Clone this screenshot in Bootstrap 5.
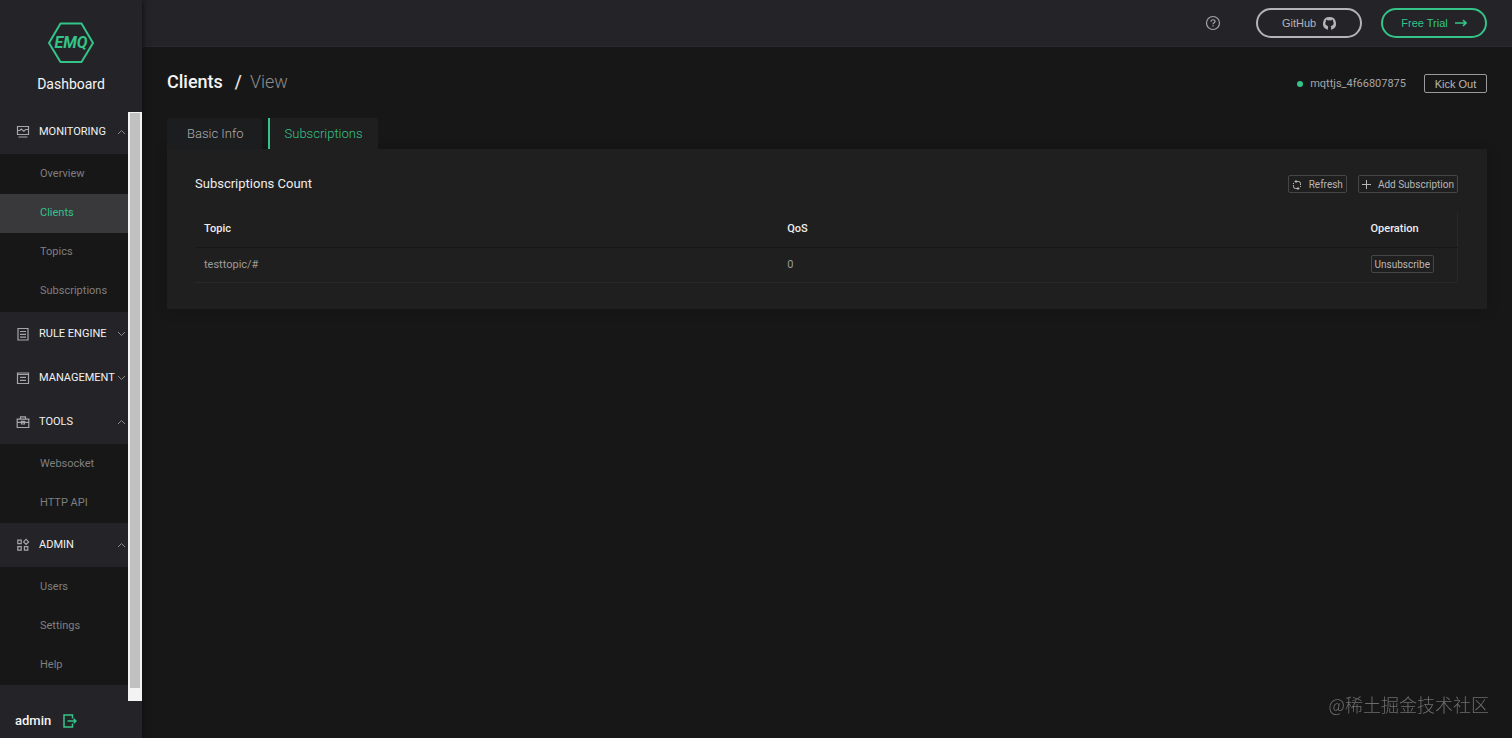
<!DOCTYPE html>
<html lang="en">
<head>
<meta charset="utf-8">
<meta name="viewport" content="width=device-width, initial-scale=1">
<title>EMQ Dashboard</title>
<link href="https://cdn.jsdelivr.net/npm/bootstrap@5.3.0/dist/css/bootstrap.min.css" rel="stylesheet">
<style>
  :root { --green: #34c388; --panel: #242428; --page: #171717; --box: #201f1f; }
  body { background: var(--page); color: #a6a6a8; font: 300 13px/20px Roboto, "Liberation Sans", sans-serif; }
  a { text-decoration: none; color: inherit; }
  svg { display: block; flex: none; fill: none; stroke: currentColor; }
  .sidebar { width: 142px; background: var(--panel); box-shadow: 1px 0 6px #101012; z-index: 2; }
  .brand { height: 110px; padding-top: 22px; }
  .brand-logo { color: var(--green); }
  .brand-name { font-size: 14px; font-weight: 400; color: #f4f4f4; margin-top: 10px; }
  .menu-scroll { min-height: 0; flex: 0 1 591px; }
  .menu-head { height: 44px; padding: 0 2px 0 16px; border: 0; background: none; color: #f2f2f2; font-size: 11px; font-weight: 400; white-space: nowrap; }
  .menu-head svg { color: #88888b; }
  .menu-head .menu-icon { margin-right: 9px; color: #a6a6a9; }
  .submenu { background: var(--page); padding-top: 1px; }
  .menu-section:first-child .submenu { padding-bottom: 1px; }
  .submenu a { height: 39px; line-height: 37px; padding-left: 40px; font-size: 11px; font-weight: 400; color: #7f7f80; display: block; }
  .submenu a.active { background: #39393c; color: var(--green); }
  .scroll-track { width: 14px; margin-top: 2px; background: #f3f3f4; padding: 1px 2px 13px; }
  .scroll-thumb { background: #c1c1c1; }
  .user-bar { height: 37px; padding: 2px 0 0 15px; color: #f4f4f4; font-size: 13px; font-weight: 500; }
  .user-bar button { color: var(--green); }
  .topbar { height: 47px; padding-right: 25px; background: var(--panel); border-bottom: 1px solid #29292d; }
  .help-link { margin-right: 35px; }
  .pill { width: 106px; height: 30px; gap: 7px; border: 2px solid #b4b4b8; border-radius: 15px; color: #b4b4b8; font: 11px/26px "Liberation Sans", sans-serif; }
  .pill-green { border-color: var(--green); color: var(--green); margin-left: 19px; }
  .content-area { padding: 20px 25px 24px; }
  .crumb { font-size: 18px; line-height: 30px; color: #8c8c8e; margin: 0; font-weight: 300; }
  .crumb a { font-weight: 500; color: #f4f4f4; }
  .crumb .slash { margin: 0 8px 0 12px; color: #e0e0e0; font-weight: 500; }
  .client-info { padding-top: 3px; }
  .status-dot { width: 6px; height: 6px; border-radius: 50%; background: var(--green); margin-right: 7px; }
  .client-id { font-size: 11px; font-weight: 400; margin-right: 18px; }
  .line-btn { background: transparent; font-family: Roboto, "Liberation Sans", sans-serif; font-weight: 400; border: 1px solid #464646; border-radius: 2px; color: #b8b8b8; font-size: 10px; line-height: 12px; height: 18px; padding: 1px 3px 0; white-space: nowrap; }
  .line-btn svg { margin-right: 7px; }
  .kick { font-family: "Liberation Sans", sans-serif; font-size: 11px; height: 19px; width: 63px; border-color: #9a9a9a; }
  .tab-row { margin-top: 21px; }
  .tab-row button { height: 31px; border: 0; background: var(--box); font-size: 13px; line-height: 30px; color: #adadb0; font-weight: 300; padding: 0 18px 0 20px; border-radius: 3px 3px 0 0; white-space: nowrap; }
  .tab-row button:first-child { background: #1b1d1f; }
  .tab-row button.active { color: var(--green); border-left: 2px solid var(--green); border-radius: 0 3px 0 0; padding: 0 15px; margin-left: 6px; }
  .panel-box { background: var(--box); padding: 25px 29px 26px 28px; box-shadow: 0 1px 8px #141414; }
  .panel-title { font-size: 13px; line-height: 20px; font-weight: 400; color: #ededed; margin: 0; }
  .panel-actions { gap: 11px; }
  .topics { table-layout: fixed; margin-top: 18px; border-right: 1px solid #292828; border-bottom: 1px solid #292828; }
  .topics th { height: 35px; font-size: 11px; font-weight: 500; color: #ededed; border-bottom: 1px solid #171717; padding: 0 9px; }
  .topics td { height: 35px; font-size: 11px; font-weight: 400; color: #9c9c9c; padding: 0 9px; }
  .topics .col-op { width: 96px; }
  .watermark { position: fixed; right: 23px; bottom: 21px; font: 300 18px/26px "Noto Sans CJK SC", sans-serif; color: #6d6d6d; }
</style>
</head>
<body>
<div class="d-flex min-vh-100">
  <aside class="sidebar d-flex flex-column flex-shrink-0 vh-100 sticky-top">
    <div class="brand d-flex flex-column align-items-center">
      <svg class="brand-logo" width="46" height="42" viewBox="0 0 46 42" stroke-width="2" stroke-linejoin="round" aria-label="EMQ">
        <path d="M12.500 1.500h21L45 21 33.500 40h-21L1 21Z"/>
        <text x="23" y="26" text-anchor="middle" font-family="Roboto" font-size="16" font-weight="700" font-style="italic" fill="currentColor" stroke="none">EMQ</text>
      </svg>
      <div class="brand-name">Dashboard</div>
    </div>
    <div class="menu-scroll d-flex">
      <nav class="flex-grow-1 overflow-hidden">
        <div class="menu-section">
          <button class="menu-head w-100 d-flex align-items-center">
            <svg class="menu-icon" width="14" height="14" viewBox="0 0 14 14" stroke-width="1.200"><path d="M1.500 1.500h11v8h-11zM1.500 5.500h2.300l1.500-1.500 2.500 2.300 2-1.800h2.700M2.500 12h9"/></svg>
            MONITORING
            <svg class="ms-auto" width="9" height="6" viewBox="0 0 9 6"><path d="M1 5l3.500-3.500L8 5"/></svg>
          </button>
          <div class="submenu"><a href="#">Overview</a><a href="#" class="active">Clients</a><a href="#">Topics</a><a href="#">Subscriptions</a></div>
        </div>
        <div class="menu-section">
          <button class="menu-head w-100 d-flex align-items-center">
            <svg class="menu-icon" width="14" height="14" viewBox="0 0 14 14" stroke-width="1.200"><path d="M2 1.500h10v11.500H2zM4 4.500h6M4 7.300h6M4 10.100h6"/></svg>
            RULE ENGINE
            <svg class="ms-auto" width="9" height="6" viewBox="0 0 9 6"><path d="M1 1l3.500 3.500L8 1"/></svg>
          </button>
        </div>
        <div class="menu-section">
          <button class="menu-head w-100 d-flex align-items-center">
            <svg class="menu-icon" width="14" height="14" viewBox="0 0 14 14" stroke-width="1.200"><path d="M1.500 2h11v10.500h-11zM1.500 3.500h11M4 6.300h6M4 9.300h6"/></svg>
            MANAGEMENT
            <svg class="ms-auto" width="9" height="6" viewBox="0 0 9 6"><path d="M1 1l3.500 3.500L8 1"/></svg>
          </button>
        </div>
        <div class="menu-section">
          <button class="menu-head w-100 d-flex align-items-center">
            <svg class="menu-icon" width="14" height="14" viewBox="0 0 14 14" stroke-width="1.200"><path d="M1.200 4.200h11.600v8.300H1.200zM4.500 4V1.800h5V4M1.200 7.300h11.600M5.500 6.300h3v2.700h-3z"/></svg>
            TOOLS
            <svg class="ms-auto" width="9" height="6" viewBox="0 0 9 6"><path d="M1 5l3.500-3.500L8 5"/></svg>
          </button>
          <div class="submenu"><a href="#">Websocket</a><a href="#">HTTP API</a></div>
        </div>
        <div class="menu-section">
          <button class="menu-head w-100 d-flex align-items-center">
            <svg class="menu-icon" width="14" height="14" viewBox="0 0 14 14" stroke-width="1.200"><path d="M1.800 2.200h3.400v3.400H1.800zM1.800 8.700h3.400v3.400H1.800zM8.400 8.700h3.400v3.400H8.400zM10.100 1.400l2.500 2.500-2.500 2.500-2.500-2.500z"/></svg>
            ADMIN
            <svg class="ms-auto" width="9" height="6" viewBox="0 0 9 6"><path d="M1 5l3.500-3.500L8 5"/></svg>
          </button>
          <div class="submenu"><a href="#">Users</a><a href="#">Settings</a><a href="#">Help</a></div>
        </div>
      </nav>
      <div class="scroll-track d-flex flex-shrink-0"><div class="scroll-thumb w-100"></div></div>
    </div>
    <div class="user-bar d-flex align-items-center mt-auto">
      admin
      <button class="border-0 bg-transparent p-0 ms-2 ps-1" aria-label="Log out">
        <svg width="14" height="14" viewBox="0 0 14 14" stroke-width="1.500"><path d="M9.500 4.500V1H1v12h8.500V9.500M4.500 7H13M10.700 4.800L13 7l-2.300 2.200"/></svg>
      </button>
    </div>
  </aside>

  <div class="flex-grow-1 overflow-hidden">
    <header class="topbar d-flex align-items-center justify-content-end">
      <a href="#" class="help-link" aria-label="Help">
        <svg width="16" height="16" viewBox="0 0 16 16" stroke="#98989c" stroke-width="1.200"><circle cx="8" cy="8" r="6.500"/><path d="M6 6.700c0-2.700 4-2.500 4-.2C10 7.800 8 7.700 8 9.300M8 10.300v1.300"/></svg>
      </a>
      <a href="#" class="pill d-flex align-items-center justify-content-center">GitHub
        <svg width="13" height="13" viewBox="0 0 16 16"><path fill="currentColor" stroke="none" d="M8 0a8 8 0 0 0-2.530 15.590c.4.070.55-.17.55-.38v-2.900c.07-.52.280-.87.510-1.070-1.780-.2-3.640-.89-3.640-3.450 0-.87.310-1.590.82-2.150-.08-.2-.36-1.020.08-2.120 0 0 .67-.21 2.200.82a7.600 7.600 0 0 1 4 0c1.530-1.040 2.200-.82 2.200-.82.440 1.100.160 1.920.08 2.120.51.560.82 1.270.82 2.150 0 2.570-1.870 3.250-3.650 3.450.29.250.54.730.54 1.480v2.490c0 .21.150.46.550.38A8 8 0 0 0 8 0z"/><path stroke-width="1.300" d="M2.300 10.700c1.400.1 1.200 2.200 3.900 1.900"/></svg>
      </a>
      <a href="#" class="pill pill-green d-flex align-items-center justify-content-center">Free Trial
        <svg width="12" height="10" viewBox="0 0 12 10" stroke-width="1.600"><path d="M0 5h11M8 2l3 3-3 3"/></svg>
      </a>
    </header>

    <main class="content-area">
      <div class="d-flex align-items-center">
        <h1 class="crumb"><a href="#">Clients</a><span class="slash">/</span>View</h1>
        <div class="client-info d-flex align-items-center ms-auto">
          <span class="status-dot"></span>
          <span class="client-id">mqttjs_4f66807875</span>
          <button class="line-btn kick">Kick Out</button>
        </div>
      </div>

      <div class="tab-row d-flex" role="tablist">
        <button role="tab">Basic Info</button>
        <button role="tab" class="active" aria-selected="true">Subscriptions</button>
      </div>

      <section class="panel-box">
        <div class="d-flex align-items-center">
          <h2 class="panel-title me-auto">Subscriptions Count</h2>
          <div class="panel-actions d-flex">
            <button class="line-btn d-flex align-items-center">
              <svg width="10" height="10" viewBox="0 0 10 10"><path d="M3 1.500h3.500a2 2 0 0 1 2 2V5M1.500 5v1.500a2 2 0 0 0 2 2H7M4.500 0L3 1.500 4.500 3M5.500 7L7 8.500 5.500 10M1.500 4V3M8.500 6v1"/></svg>Refresh
            </button>
            <button class="line-btn d-flex align-items-center">
              <svg width="9" height="9" viewBox="0 0 9 9"><path d="M0 4.500h9M4.500 0v9"/></svg>Add Subscription
            </button>
          </div>
        </div>
        <table class="topics w-100">
          <thead><tr><th>Topic</th><th>QoS</th><th class="col-op">Operation</th></tr></thead>
          <tbody><tr><td>testtopic/#</td><td>0</td><td><button class="line-btn">Unsubscribe</button></td></tr></tbody>
        </table>
      </section>
    </main>
  </div>
</div>
<div class="watermark">@稀土掘金技术社区</div>
<script src="https://cdn.jsdelivr.net/npm/bootstrap@5.3.0/dist/js/bootstrap.bundle.min.js"></script>
</body>
</html>
